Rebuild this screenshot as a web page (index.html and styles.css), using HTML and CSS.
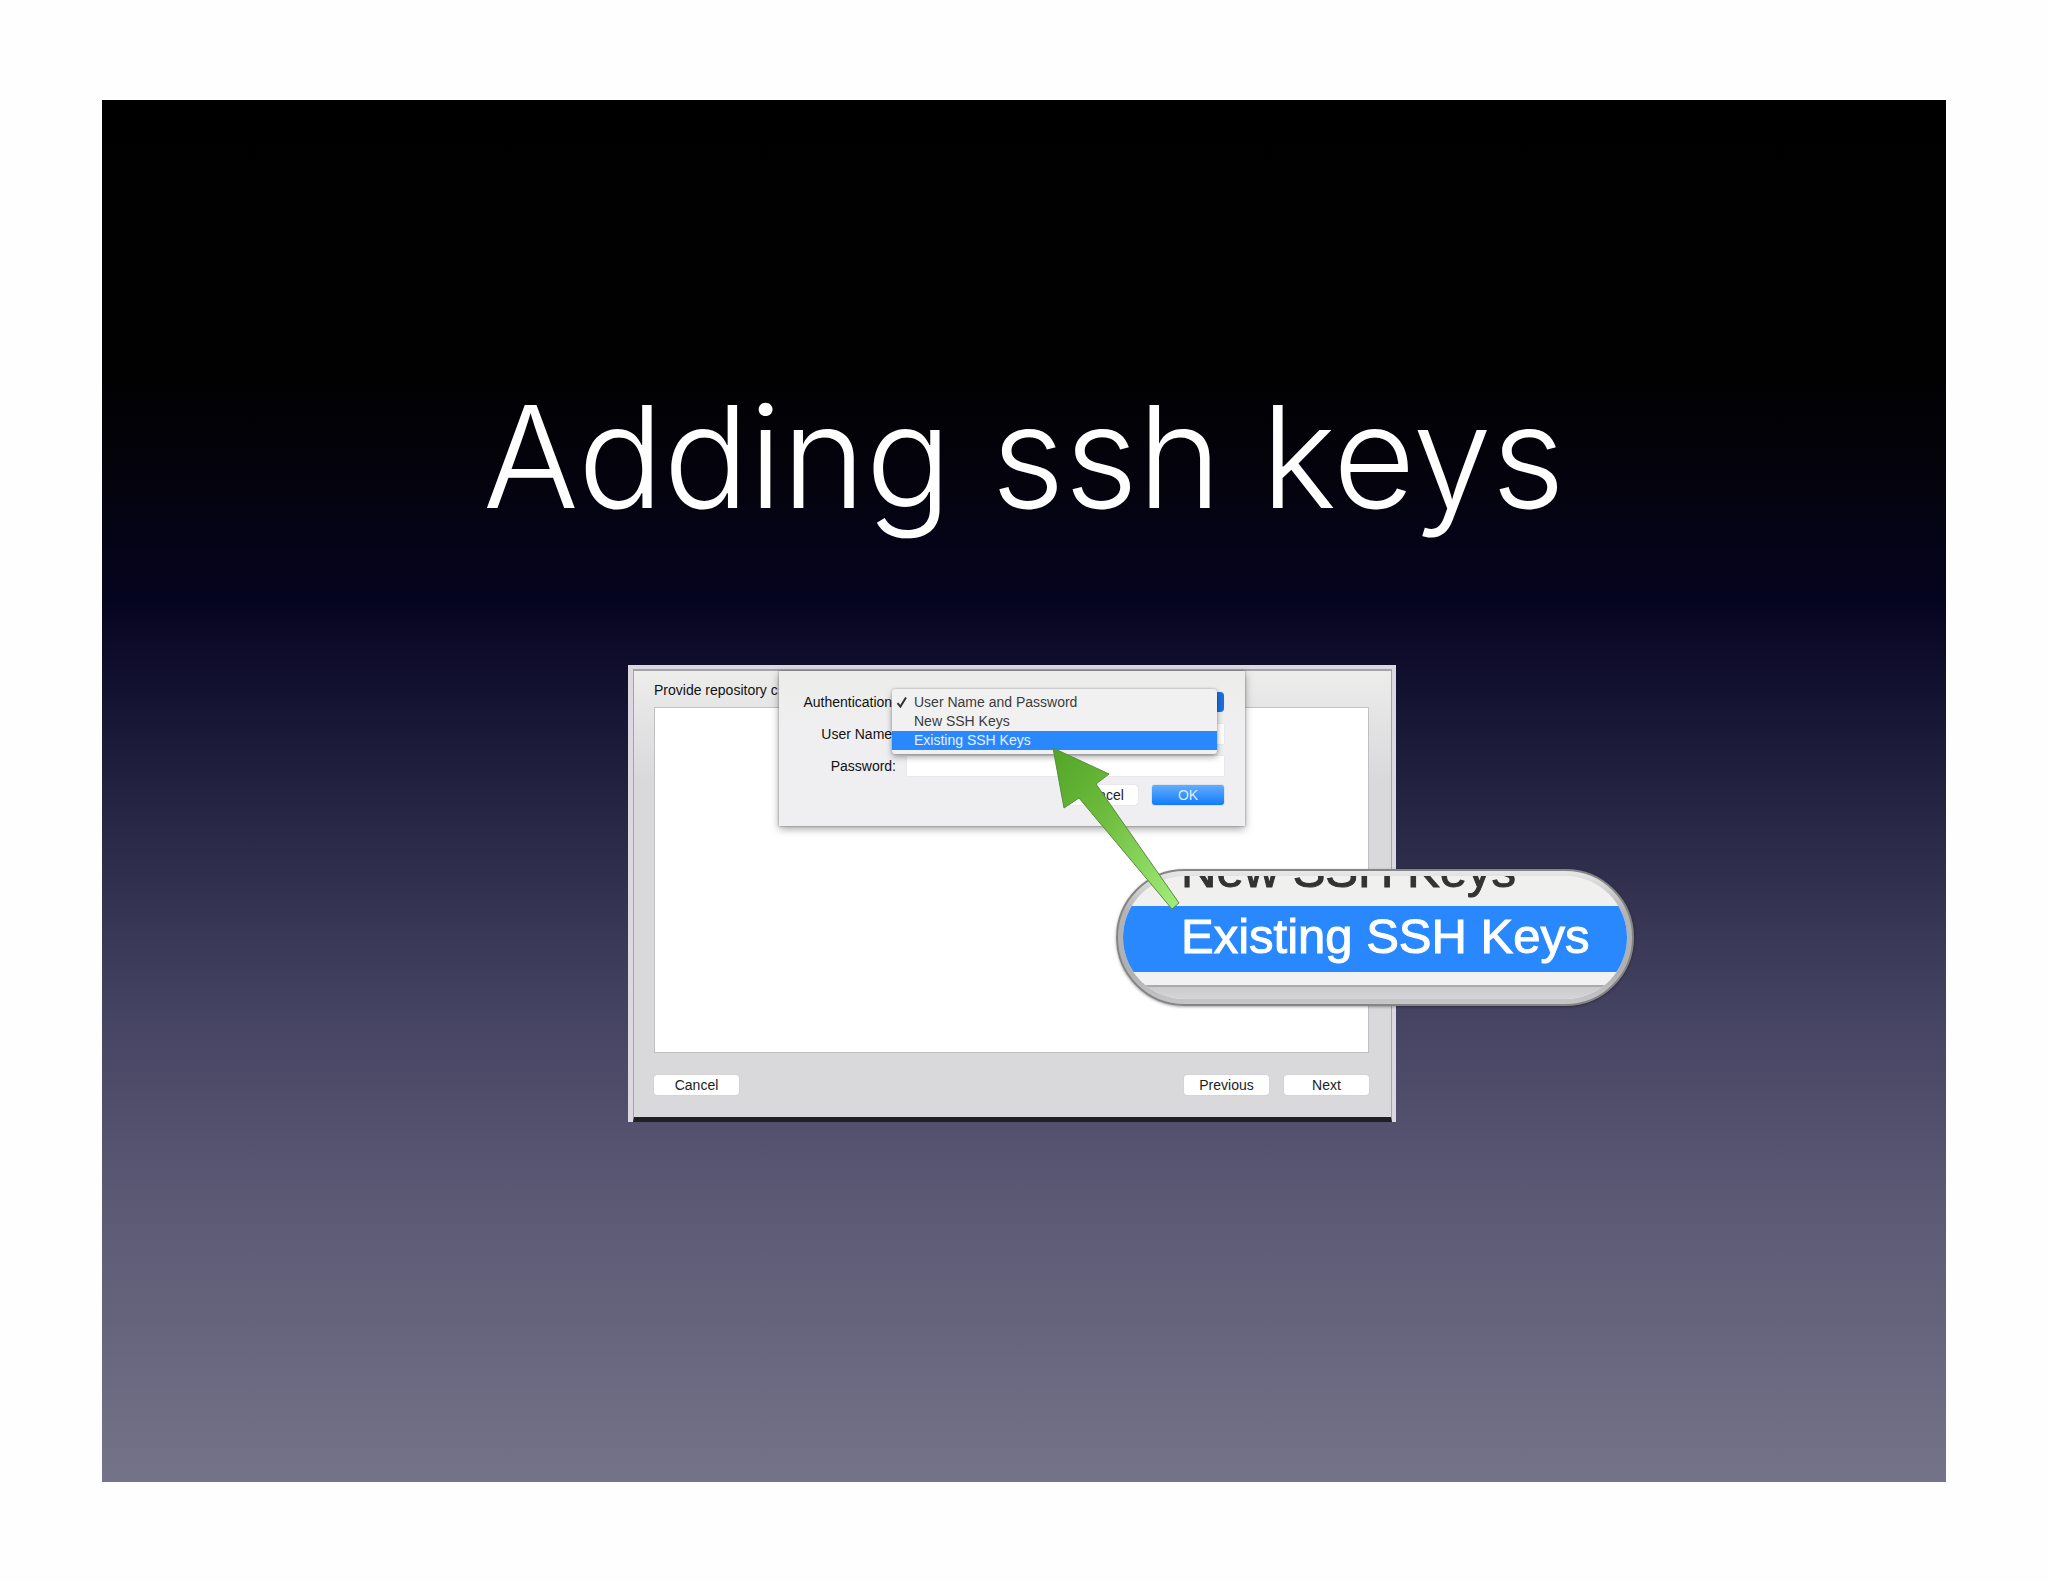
FILE: index.html
```html
<!DOCTYPE html>
<html lang="en">
<head>
<meta charset="utf-8">
<meta name="viewport" content="width=device-width, initial-scale=1">
<title>Adding ssh keys</title>
<link rel="stylesheet" href="styles.css">
</head>
<body>
<main class="slide">
  <h1 class="title">Adding ssh keys</h1>
  <figure class="shot">
    <section class="window">
      <p class="heading">Provide repository c</p>
      <div class="canvas"></div>
      <footer class="actions">
        <button type="button" class="btn">Cancel</button>
        <button type="button" class="btn push">Previous</button>
        <button type="button" class="btn">Next</button>
      </footer>
    </section>

    <form class="sheet">
      <div class="row">
        <label for="auth">Authentication:</label>
        <select id="auth" class="picker"><option></option></select>
      </div>
      <div class="row">
        <label for="user">User Name:</label>
        <input id="user" class="field" type="text">
      </div>
      <div class="row">
        <label for="pass">Password:</label>
        <input id="pass" class="field" type="password">
      </div>
      <div class="sheet-actions">
        <button type="button" class="btn small">Cancel</button>
        <button type="button" class="btn small primary">OK</button>
      </div>
      <ul class="menu">
        <li>
          <svg class="check" viewBox="0 0 12 12" aria-hidden="true"><path d="M1.5 7.2 4.4 10.6 10 1.4"/></svg>
          User Name and Password
        </li>
        <li>New SSH Keys</li>
        <li class="selected">Existing SSH Keys</li>
      </ul>
    </form>

    <div class="lens">
      <div class="lens-view">
        <p class="lens-row">New SSH Keys</p>
        <p class="lens-row selected">Existing SSH Keys</p>
        <div class="lens-foot"></div>
      </div>
    </div>

    <svg class="arrow" viewBox="0 0 130 166" aria-hidden="true">
      <defs>
        <linearGradient id="green" x1="0" y1="0" x2="1" y2="1">
          <stop offset="0" stop-color="#52a528"/>
          <stop offset=".4" stop-color="#6cbb3c"/>
          <stop offset="1" stop-color="#a3ee7c"/>
        </linearGradient>
      </defs>
      <path d="M2 2 58 28 45 38 128 157 121 163 28 52 13 62Z"/>
    </svg>
  </figure>
</main>
</body>
</html>
```
FILE: styles.css
```css
* {
  box-sizing: border-box;
}

body {
  margin: 0;
  padding: 100px 5%;
  background: #fefefe;
  font-family: "Liberation Sans", Arial, sans-serif;
}

.slide {
  display: flex;
  flex-direction: column;
  align-items: center;
  aspect-ratio: 4 / 3;
  padding-top: 276px;
  background: linear-gradient(#000 0%, #010102 20%, #04030e 28%, #05041f 36%, #100e2d 41%, #282645 52%, #454362 66%, #5a5873 79%, #747389 100%);
}

.title {
  margin: 0;
  color: #fff;
  font-family: Inter, "Helvetica Neue", sans-serif;
  font-size: 142px;
  font-weight: 300;
  line-height: 160px;
}

/* Screenshot frame */

.shot {
  position: relative;
  width: 100%;
  max-width: 768px;
  margin: 129px 24px 0 0;
  padding: 4px 4px 0 5px;
  background: #dbd9df;
  color: #111;
  font-size: 14px;
  line-height: 16px;
}

.window {
  display: flex;
  flex-direction: column;
  padding: 11px 22px 22px 20px;
  border: 1px solid #a4a4a4;
  border-top-width: 2px;
  border-bottom: 5px solid #1f1f24;
  background: linear-gradient(#ededec, #d9d8db 110px, #d9d8da);
}

.heading {
  margin: 0 0 9px;
}

.canvas {
  height: 346px;
  border: 1px solid #c0c0c2;
  background: #fff;
}

.actions {
  display: flex;
  gap: 15px;
  margin-top: 22px;
}

.btn {
  width: 85px;
  height: 20px;
  padding: 0;
  border: 0;
  border-radius: 3px;
  background: #fff;
  box-shadow: 0 0 1px #aaa;
  color: #222;
  font: inherit;
}

.push {
  margin-left: auto;
}

/* Credentials sheet */

.sheet {
  position: absolute;
  top: 6px;
  left: 151px;
  width: 466px;
  padding: 21px 21px 21px 16px;
  background: linear-gradient(#ecedea, #efeff1 60px, #efeff1);
  box-shadow: 0 3px 8px rgba(0, 0, 0, .35), 0 0 2px rgba(0, 0, 0, .4);
}

.row {
  display: grid;
  grid-template-columns: 101px 1fr;
  gap: 11px;
  align-items: center;
  height: 20px;
  margin-bottom: 12px;
}

.row label {
  justify-self: end;
}

.picker,
.field {
  width: 100%;
  height: 20px;
  padding: 0;
  border: 0;
  background: #fff;
  box-shadow: 0 0 1px #ccc;
}

.picker {
  appearance: none;
  border-right: 20px solid #1b6fe0;
  border-radius: 4px;
}

.sheet-actions {
  display: flex;
  justify-content: flex-end;
  gap: 14px;
  margin-top: -3px;
}

.small {
  width: 72px;
}

.primary {
  background: linear-gradient(#64adfb, #127bfb);
  box-shadow: 0 0 1px #2a70d0;
  color: #dcecff;
}

.menu {
  position: absolute;
  top: 18px;
  left: 113px;
  width: 325px;
  margin: 0;
  padding: 4px 0;
  border-radius: 3px;
  background: #f1f1f1;
  box-shadow: 0 3px 6px rgba(0, 0, 0, .35), 0 0 2px rgba(0, 0, 0, .3);
  color: #3c3c3c;
  list-style: none;
}

.menu li {
  position: relative;
  padding-left: 22px;
  line-height: 19px;
}

.selected {
  background: #2a88ff;
  color: #fff;
}

.menu .selected {
  color: #e4f0ff;
}

.check {
  position: absolute;
  top: 3px;
  left: 4px;
  width: 12px;
  height: 12px;
  fill: none;
  stroke: #333;
  stroke-width: 2;
}

/* Magnified callout */

.lens {
  position: absolute;
  top: 204px;
  left: 488px;
  width: 518px;
  height: 137px;
  padding: 5px;
  border: 2px solid #858585;
  border-radius: 69px;
  background: linear-gradient(#e8e8e8, #b4b4b6 30%, #b0b0b2 75%, #c6c6c8);
  box-shadow: 0 1px 3px rgba(0, 0, 0, .35);
}

.lens-view {
  display: flex;
  flex-direction: column;
  justify-content: flex-end;
  height: 100%;
  overflow: hidden;
  border-radius: 62px;
  background: #f0f0ef;
}

.lens-row {
  flex: none;
  height: 66px;
  margin: 0;
  padding-left: 58px;
  color: #333;
  font-size: 49px;
  line-height: 60px;
  white-space: nowrap;
  -webkit-text-stroke: 1px currentColor;
}

.lens-row.selected {
  color: #fff;
}

.lens-foot {
  flex: none;
  height: 27px;
  border-top: 13px solid #f1f0f3;
  background: linear-gradient(#aaa 2px, #cacacc 2px, #d6d6d8);
}

.arrow {
  position: absolute;
  top: 81px;
  left: 423px;
  width: 130px;
  height: 166px;
  fill: url(#green);
  stroke: #5b8a40;
  stroke-width: 1;
}
```
